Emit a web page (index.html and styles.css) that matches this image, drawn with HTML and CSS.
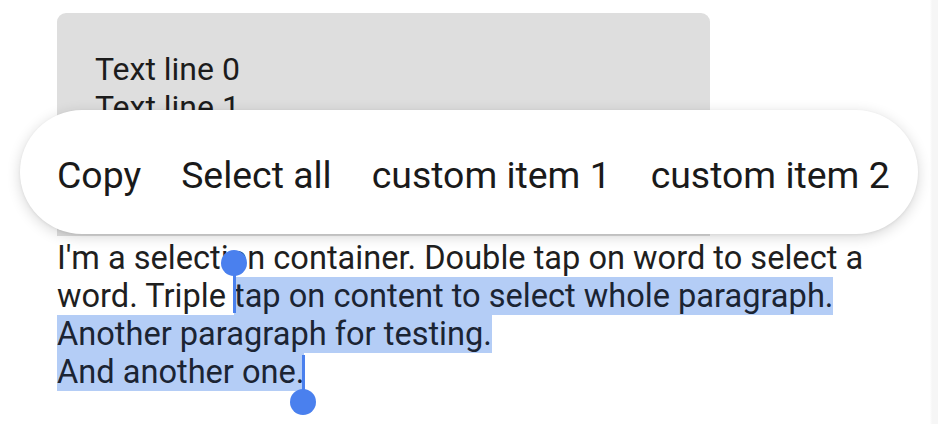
FILE: index.html
```html
<!DOCTYPE html>
<html>
<head>
<meta charset="utf-8">
<link rel="stylesheet" href="styles.css">
</head>
<body>
<div class="page">
  <div class="scroll-box">
    <div class="line">Text line 0</div>
    <div class="line">Text line 1</div>
    <div class="line">Text line 2</div>
    <div class="line">Text line 3</div>
    <div class="line">Text line 4</div>
  </div>
  <div class="selection">
    <p class="para">I'm a selection container. Double tap on word to select a word. Triple <span class="sel">tap on content to select whole paragraph.</span></p>
    <p class="para"><span class="sel">Another paragraph for testing.</span></p>
    <p class="para"><span class="sel">And another one.</span></p>
  </div>

  <div class="toolbar">
    <span class="item">Copy</span>
    <span class="item">Select all</span>
    <span class="item">custom item 1</span>
    <span class="item">custom item 2</span>
  </div>

  <div class="handle handle-start">
    <span class="knob"></span>
    <span class="stem"></span>
  </div>
  <div class="handle handle-end">
    <span class="stem"></span>
    <span class="knob"></span>
  </div>
</div>
</body>
</html>
```

FILE: styles.css
```css
html, body {
  margin: 0;
  padding: 0;
  background: #ffffff;
}

body {
  font-family: Roboto, "Noto Sans", sans-serif;
  color: #1f1f1f;
  width: 938px;
  height: 424px;
  overflow: hidden;
}

.page {
  position: relative;
  width: 938px;
  height: 424px;
  padding: 13px 0 0 57px;
  box-sizing: border-box;
  display: flex;
  flex-direction: column;
  background: linear-gradient(to right, #ffffff 0, #ffffff 930px, #f6f6f6 932px, #f6f6f6 938px);
}

.scroll-box {
  width: 653px;
  height: 223px;
  box-sizing: border-box;
  padding: 37px 38px 0;
  background: #dedede;
  border-radius: 9px 9px 0 0;
  overflow: hidden;
}

.line {
  font-size: 32px;
  line-height: 38px;
  color: #1c1c1c;
}

.selection {
  margin-top: 3px;
  width: 860px;
}

.para {
  margin: 0;
  font-size: 32.6px;
  line-height: 38px;
  color: #1f1f1f;
}

.sel {
  background: #b4cdf6;
  color: #1b2433;
}

.toolbar {
  position: absolute;
  left: 20px;
  top: 110px;
  width: 898px;
  height: 124px;
  box-sizing: border-box;
  padding: 5px 0 0 37px;
  background: #ffffff;
  border-radius: 62px;
  box-shadow: 0 3px 14px rgba(0, 0, 0, 0.16), 0 1px 3px rgba(0, 0, 0, 0.06);
  display: flex;
  align-items: center;
  gap: 40px;
}

.item {
  font-size: 37.4px;
  line-height: 44px;
  color: #1a1a1a;
  white-space: nowrap;
}

.handle {
  position: absolute;
  width: 26px;
  display: flex;
  flex-direction: column;
  align-items: center;
}

.knob {
  width: 26px;
  height: 26px;
  border-radius: 50%;
  background: #4a80ee;
}

.stem {
  width: 3px;
  background: #4a80ee;
}

.handle-start {
  left: 221px;
  top: 250px;
}

.handle-start .knob {
  margin-bottom: -6px;
}

.handle-start .stem {
  height: 43px;
}

.handle-end {
  left: 290px;
  top: 355px;
}

.handle-end .stem {
  height: 36px;
  margin-bottom: -2px;
}
```
